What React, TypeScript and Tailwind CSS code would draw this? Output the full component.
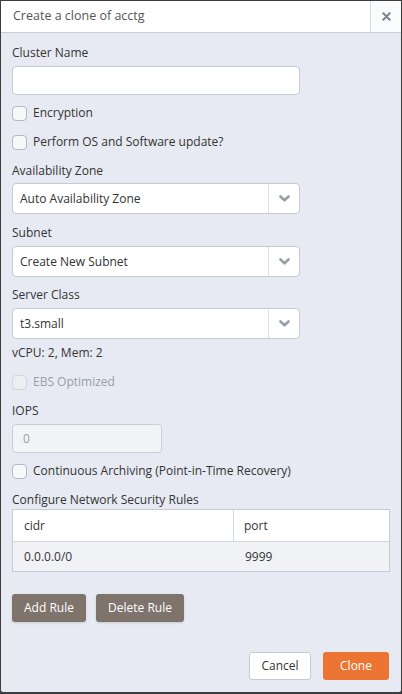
import React from "react";

const font = { fontFamily: '"Open Sans", "Noto Sans", sans-serif' };

const Check: React.FC<{ label: string; disabled?: boolean }> = ({ label, disabled }) => (
  <label className={"flex items-center gap-[6px] h-[20px] " + (disabled ? "text-[#9aa0a6]" : "text-[#333]")}>
    <span
      className={
        "w-[15px] h-[15px] rounded-[4px] border " +
        (disabled ? "border-[#d3d6dc] bg-[#eceef2]" : "border-[#b5b9c0] bg-[#f7f8fa]")
      }
    />
    <span>{label}</span>
  </label>
);

const Select: React.FC<{ value: string }> = ({ value }) => (
  <div className="flex h-[31px] w-[288px] items-stretch rounded-[4px] border border-[#c6cad2] bg-white">
    <div className="flex flex-1 items-center pl-[7px] text-[#333]">{value}</div>
    <div className="flex w-[31px] items-center justify-center border-l border-[#dcdfe4]">
      <svg width="11" height="7" viewBox="0 0 11 7">
        <path d="M1.5 1.5 L5.5 5.3 L9.5 1.5" fill="none" stroke="#9a9ea6" strokeWidth="2.6" strokeLinecap="round" strokeLinejoin="round" />
      </svg>
    </div>
  </div>
);

const App: React.FC = () => {
  return (
    <div style={font} className="h-[694px] w-[402px] bg-[#3d3d3d] p-[1px] pb-[2px] text-[12px]">
      <div className="flex h-full flex-col rounded-[2px] bg-[#e7eaf2]">
        <div className="flex h-[32px] items-stretch border-b border-[#c9cdd6] bg-white">
          <div className="flex flex-1 items-center pl-[12px] text-[12.5px] text-[#555]">Create a clone of acctg</div>
          <div className="flex w-[31px] items-center justify-center border-l border-[#d5d8de] bg-[#fafbfc]">
            <svg width="9" height="9" viewBox="0 0 9 9">
              <path d="M1.3 1.3 L7.7 7.7 M7.7 1.3 L1.3 7.7" stroke="#7a808c" strokeWidth="2" strokeLinecap="round" />
            </svg>
          </div>
        </div>

        <div className="flex flex-1 flex-col px-[11px] pt-[11px] text-[#333]">
          <div className="h-[18px] leading-[18px]">Cluster Name</div>
          <div className="mt-[4px] h-[29px] w-[288px] rounded-[4px] border border-[#c6cad2] bg-white" />

          <div className="mt-[8px] flex flex-col gap-[9px]">
            <Check label="Encryption" />
            <Check label="Perform OS and Software update?" />
          </div>

          <div className="mt-[10px] h-[18px] leading-[18px]">Availability Zone</div>
          <div className="mt-[3px]">
            <Select value="Auto Availability Zone" />
          </div>

          <div className="mt-[10px] h-[18px] leading-[18px]">Subnet</div>
          <div className="mt-[4px]">
            <Select value="Create New Subnet" />
          </div>

          <div className="mt-[9px] h-[18px] leading-[18px]">Server Class</div>
          <div className="mt-[4px]">
            <Select value="t3.small" />
          </div>

          <div className="mt-[5px] h-[18px] leading-[18px]">vCPU: 2, Mem: 2</div>
          <div className="mt-[10px]">
            <Check label="EBS Optimized" disabled />
          </div>

          <div className="mt-[10px] h-[18px] leading-[18px]">IOPS</div>
          <div className="mt-[4px] flex h-[29px] w-[150px] items-center rounded-[4px] border border-[#c9cdd4] bg-[#f3f4f7] pl-[10px] text-[#9aa0a6]">
            0
          </div>
          <div className="mt-[8px]">
            <Check label="Continuous Archiving (Point-in-Time Recovery)" />
          </div>

          <div className="mt-[10px] h-[18px] leading-[18px]">Configure Network Security Rules</div>
          <div className="w-[378px] border border-[#c6cad2]">
            <div className="grid h-[31px] grid-cols-[221px_1fr] bg-white">
              <div className="flex items-center border-r border-[#d3d6dc] pl-[11px]">cidr</div>
              <div className="flex items-center pl-[10px]">port</div>
            </div>
            <div className="grid h-[30px] grid-cols-[221px_1fr] border-t border-[#d3d6dc] bg-[#f1f2f6]">
              <div className="flex items-center pl-[11px]">0.0.0.0/0</div>
              <div className="flex items-center pl-[11px]">9999</div>
            </div>
          </div>

          <div className="mt-[22px] flex gap-[10px]">
            <button className="h-[28px] w-[74px] rounded-[3px] bg-[#7e746c] text-white shadow-sm">Add Rule</button>
            <button className="h-[28px] w-[88px] rounded-[3px] bg-[#7e746c] text-white shadow-sm">Delete Rule</button>
          </div>

          <div className="mt-auto mb-[12px] flex justify-end gap-[12px] pr-[1px]">
            <button className="h-[28px] w-[62px] rounded-[3px] border border-[#c4c9d4] bg-white text-[#333]">Cancel</button>
            <button className="h-[28px] w-[66px] rounded-[3px] bg-[#ec7533] text-white">Clone</button>
          </div>
        </div>
      </div>
    </div>
  );
};

export default App;
